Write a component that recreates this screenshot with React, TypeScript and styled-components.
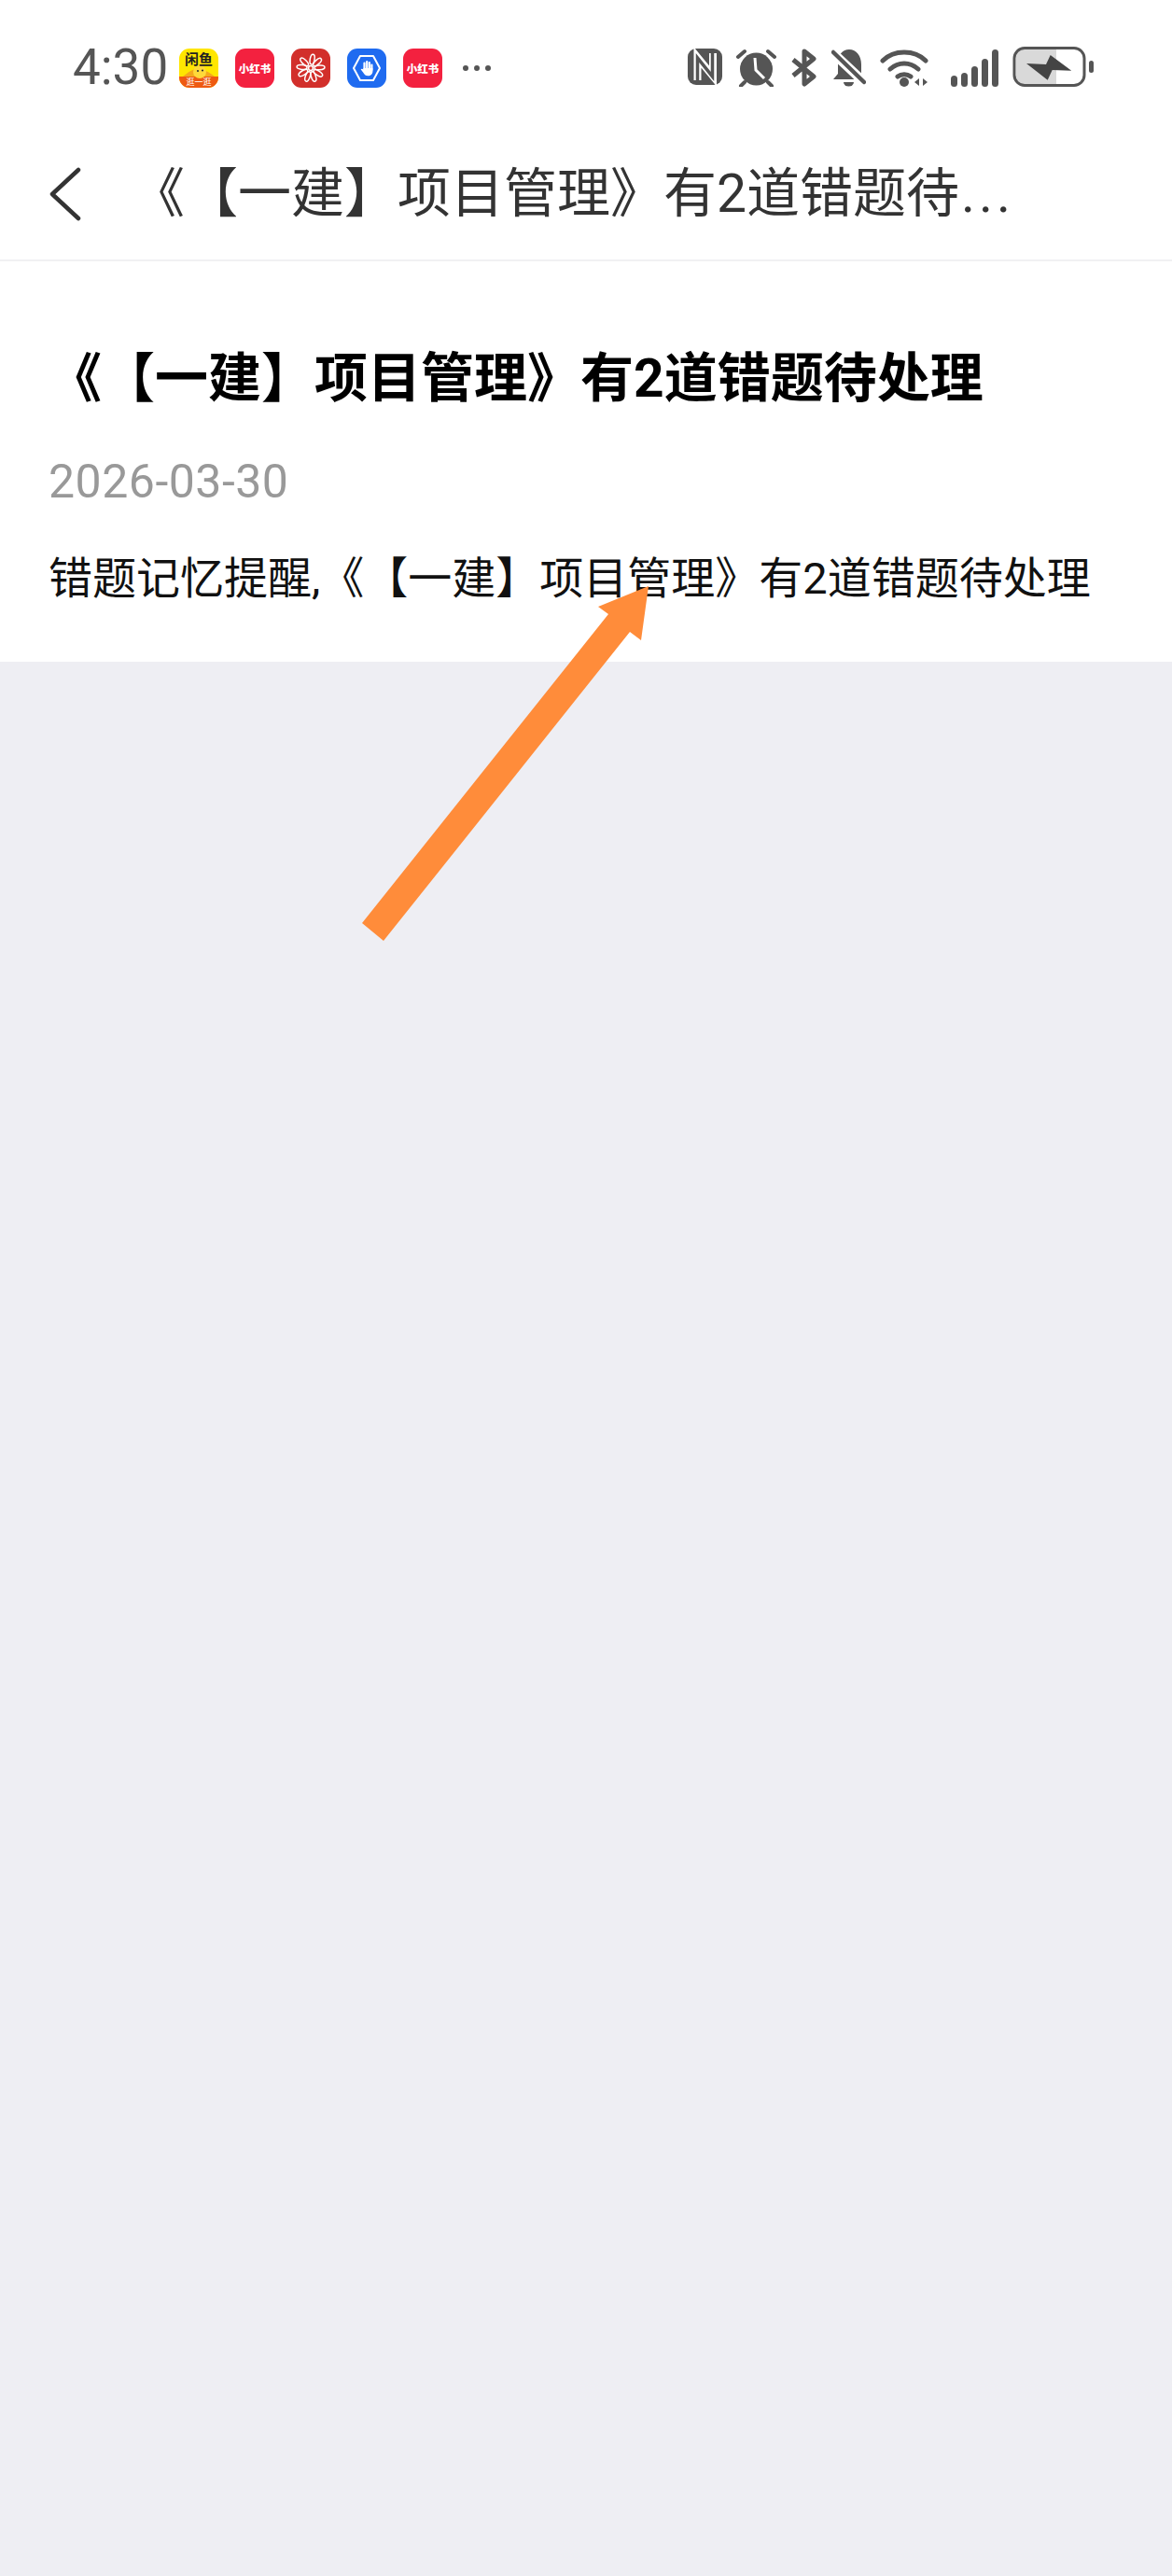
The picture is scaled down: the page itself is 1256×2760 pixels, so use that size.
import React from 'react';
import styled, { createGlobalStyle } from 'styled-components';

const GlobalStyle = createGlobalStyle`
  html, body {
    margin: 0;
    padding: 0;
    background: #eeeef3;
    font-family: Roboto, "Noto Sans CJK SC", sans-serif;
    text-spacing-trim: space-all;
  }
`;

const Page = styled.div`
  width: 1256px;
  height: 2760px;
  position: relative;
  overflow: hidden;
  background: #eeeef3;
`;

const StatusBar = styled.div`
  height: 140px;
  background: #fff;
  display: flex;
  align-items: flex-start;
  justify-content: space-between;
  padding: 52px 84px 0 78px;
  box-sizing: border-box;
`;

const StatusLeft = styled.div`
  display: flex;
  align-items: center;
  height: 41px;
`;

const Clock = styled.span`
  font-size: 53px;
  line-height: 41px;
  color: #555;
  width: 114px;
`;

const AppIcon = styled.div<{ $bg: string }>`
  width: 42px;
  height: 42px;
  margin-right: 18px;
  border-radius: 11px;
  background: ${(p) => p.$bg};
  display: flex;
  align-items: center;
  justify-content: center;
  overflow: hidden;
  flex-shrink: 0;
`;

const AppLabel = styled.span`
  color: #fff;
  font-size: 11.5px;
  font-weight: 900;
  white-space: nowrap;
`;

const Dots = styled.div`
  display: flex;
  gap: 6px;
  margin-left: 4px;
`;

const Dot = styled.i`
  width: 6px;
  height: 6px;
  border-radius: 50%;
  background: #555;
`;

const StatusRight = styled.div`
  display: flex;
  align-items: flex-start;
  gap: 15px;
`;

const SignalIcon = styled.svg`
  margin-left: 8px;
`;

const BatteryIcon = styled.svg`
  margin-top: -2px;
`;

const NavBar = styled.div`
  height: 138px;
  background: #fff;
  border-bottom: 2px solid #f1f1f3;
  display: flex;
  align-items: center;
  padding-left: 52px;
`;

const BackIcon = styled.svg`
  margin-bottom: 3px;
`;

const NavTitle = styled.div`
  margin-left: 53px;
  margin-bottom: 14px;
  font-size: 57px;
  color: #333;
  white-space: nowrap;
`;

const NavEllipsis = styled.span`
  letter-spacing: 4px;
  margin-left: 2px;
`;

const Card = styled.div`
  background: #fff;
  height: 429px;
  padding: 88px 52px 0;
  box-sizing: border-box;
`;

const Title = styled.div`
  font-size: 57px;
  line-height: 76px;
  font-weight: 700;
  color: #000;
  white-space: nowrap;
`;

const DateText = styled.div`
  margin-top: 42px;
  font-size: 50px;
  line-height: 60px;
  letter-spacing: 0.5px;
  color: #999;
`;

const Body = styled.div`
  margin-top: 41px;
  font-size: 47px;
  line-height: 66px;
  color: #111;
  white-space: nowrap;
`;

const ArrowLayer = styled.svg`
  position: absolute;
  left: 0;
  top: 0;
`;

const RedBook = () => (
  <AppIcon $bg="#f3213f">
    <AppLabel>小红书</AppLabel>
  </AppIcon>
);

export default function App() {
  return (
    <Page>
      <GlobalStyle />
      <StatusBar>
        <StatusLeft>
          <Clock>4:30</Clock>
          <AppIcon $bg="#ffe600">
            <svg width="42" height="42" viewBox="0 0 42 42">
              <rect y="30" width="42" height="12" fill="#ee5a12" />
              <path d="M4 30c6-5 10-8 16-8s12 3 18 8z" fill="#f5a81c" />
              <circle cx="22" cy="25" r="7" fill="#ffd93a" />
              <circle cx="20" cy="24" r="1.1" fill="#333" />
              <circle cx="25" cy="23.5" r="1.1" fill="#333" />
              <text x="21" y="17" textAnchor="middle" fontSize="15" textLength="30" lengthAdjust="spacingAndGlyphs" fontWeight="700" fill="#222">闲鱼</text>
              <text x="21" y="39" textAnchor="middle" fontSize="9" fill="#fff">逛一逛</text>
            </svg>
          </AppIcon>
          <RedBook />
          <AppIcon $bg="#d22f2b">
            <svg width="42" height="42" viewBox="0 0 42 42">
              <g stroke="#fff" strokeWidth="1.5" fill="none">
                {[10, 48, 86, 124, 162, 200, 238, 276, 314].map((a) => (
                  <ellipse key={a} cx="21" cy="11.5" rx="2.4" ry="5.5" transform={`rotate(${a} 21 21)`} />
                ))}
                <circle cx="21" cy="21" r="2.4" />
              </g>
            </svg>
          </AppIcon>
          <AppIcon $bg="#1f6bf0">
            <svg width="42" height="42" viewBox="0 0 42 42">
              <path d="M7 21l7-13h14l7 13-7 13H14z" fill="none" stroke="#fff" strokeWidth="2" strokeLinejoin="round" />
              <g stroke="#fff" strokeWidth="2.2" strokeLinecap="round">
                <path d="M18.5 15.500V22M21.200 14V22M23.900 15V22M26.400 17.500V23" />
              </g>
              <path d="M17.400 21h10v3.500c0 3-2.200 4.800-5 4.800-2.500 0-3.600-1.200-4.800-3l-3-4c1-1.200 2-.6 2.800.3z" fill="#fff" />
            </svg>
          </AppIcon>
          <RedBook />
          <Dots>
            <Dot />
            <Dot />
            <Dot />
          </Dots>
        </StatusLeft>
        <StatusRight>
          <svg width="37" height="39" viewBox="0 0 37 39">
            <rect width="37" height="39" rx="9" fill="#555" />
            <path d="M10.500 34V9.500L27 29.500V5" fill="none" stroke="#fff" strokeWidth="8" />
            <path d="M10.500 35V10l16 20V4" fill="none" stroke="#555" strokeWidth="3.500" />
          </svg>
          <svg width="43" height="41" viewBox="0 0 43 41">
            <circle cx="21.500" cy="22" r="17.500" fill="#555" />
            <path d="M20 10l1 13 9 9" fill="none" stroke="#fff" strokeWidth="3" />
            <path d="M2 9l7-6M41 9l-7-6M9 36l-4 4M34 36l4 4" stroke="#555" strokeWidth="4" strokeLinecap="round" />
          </svg>
          <svg width="29" height="41" viewBox="0 0 29 41">
            <path d="M3 12l22 18-10 8V3l10 8L3 29" fill="none" stroke="#555" strokeWidth="5" strokeLinejoin="round" />
          </svg>
          <svg width="37" height="41" viewBox="0 0 37 41">
            <path d="M19 1c8 0 13 7 13 16v10l4 6H2l5-6V14C7 7 12 1 19 1z" fill="#555" />
            <path d="M13 36h11a5.500 4.500 0 0 1-11 0z" fill="#555" />
            <path d="M0 3l37 35" stroke="#fff" strokeWidth="10" />
            <path d="M2 4l33 32" stroke="#555" strokeWidth="4.500" strokeLinecap="round" />
          </svg>
          <svg width="53" height="41" viewBox="0 0 53 41">
            <path d="M3 13C15 1 37 1 49 13M11 22c9-8 21-8 30 0M19 30c4-3 10-3 14 0" fill="none" stroke="#555" strokeWidth="5" strokeLinecap="round" />
            <circle cx="26" cy="36" r="5" fill="#555" />
            <path d="M42 32v8l-5-4zM46 32v8l5-4z" fill="#555" />
          </svg>
          <SignalIcon width="51" height="41" viewBox="0 0 51 41">
            {[12, 15, 22, 30, 40].map((h, i) => (
              <rect key={i} x={i * 11} y={41 - h} width="7" height={h} rx="3.500" fill="#555" />
            ))}
          </SignalIcon>
          <BatteryIcon width="87" height="43" viewBox="0 0 87 43">
            <path d="M5 3h42v37H12a8 8 0 0 1-8-8V11a8 8 0 0 1 1-8z" fill="#d9d9d9" />
            <rect x="2" y="1.500" width="75" height="40" rx="11" fill="none" stroke="#555" strokeWidth="3" />
            <path d="M15 18l21 1 4.700-10L63.300 25.700 42.700 25l-5 10.700z" fill="#444" />
            <rect x="82" y="15" width="5" height="13" rx="2.500" fill="#555" />
          </BatteryIcon>
        </StatusRight>
      </StatusBar>
      <NavBar>
        <BackIcon width="36" height="58" viewBox="0 0 36 58">
          <path d="M32 3L4 29l28 26" fill="none" stroke="#333" strokeWidth="4.500" strokeLinecap="round" strokeLinejoin="round" />
        </BackIcon>
        <NavTitle>《【一建】项目管理》有2道错题待<NavEllipsis>...</NavEllipsis></NavTitle>
      </NavBar>
      <Card>
        <Title>《【一建】项目管理》有2道错题待处理</Title>
        <DateText>2026-03-30</DateText>
        <Body>错题记忆提醒,《【一建】项目管理》有2道错题待处理</Body>
      </Card>
      <ArrowLayer width="1256" height="2760" viewBox="0 0 1256 2760">
        <polygon points="388,989 411,1008 675,677 687,686 695,628 641,650 652,658" fill="#ff8c3a" />
      </ArrowLayer>
    </Page>
  );
}
